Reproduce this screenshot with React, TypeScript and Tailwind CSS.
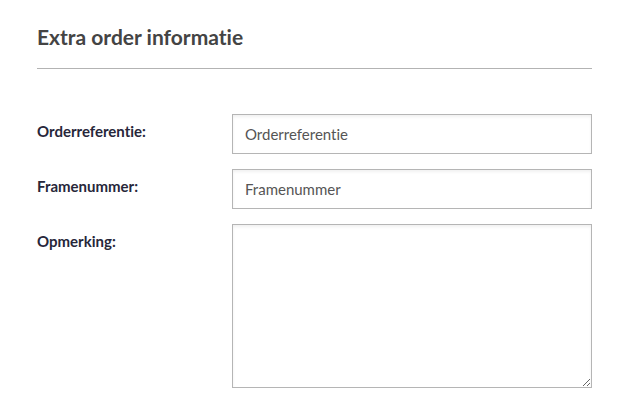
import React from "react";

const fields = [
  { id: "ref", label: "Orderreferentie:", placeholder: "Orderreferentie" },
  { id: "frame", label: "Framenummer:", placeholder: "Framenummer" },
];

const App = () => {
  return (
    <div
      className="min-h-screen bg-white [font-variant-ligatures:none]"
      style={{ fontFamily: "Lato, 'Open Sans', sans-serif" }}
    >
      <div className="w-[555px] ml-[37px] pt-[24px]">
        <h2 className="text-[21px] leading-[25px] font-bold text-[#444]">Extra order informatie</h2>
        <div className="mt-[19px] h-px bg-[#b3b3b3]" />

        <div className="mt-[45px] flex flex-col gap-[15px]">
          {fields.map((f) => (
            <div key={f.id} className="flex">
              <label htmlFor={f.id} className="w-[195px] pt-[7px] text-[15px] leading-[20px] font-bold text-[#27273a]">
                {f.label}
              </label>
              <input
                id={f.id}
                placeholder={f.placeholder}
                className="w-[360px] h-[40px] px-[12px] border border-[#b5b5b5] bg-white text-[15px] text-[#555] placeholder:text-[#555] shadow-[inset_0_2px_3px_rgba(0,0,0,0.06)] outline-none"
              />
            </div>
          ))}
          <div className="flex">
            <label htmlFor="note" className="w-[195px] pt-[7px] text-[15px] leading-[20px] font-bold text-[#27273a]">
              Opmerking:
            </label>
            <textarea
              id="note"
              className="w-[360px] h-[164px] px-[12px] py-[8px] border border-[#b5b5b5] bg-white text-[15px] text-[#555] shadow-[inset_0_2px_3px_rgba(0,0,0,0.06)] outline-none"
            />
          </div>
        </div>
      </div>
    </div>
  );
};

export default App;
